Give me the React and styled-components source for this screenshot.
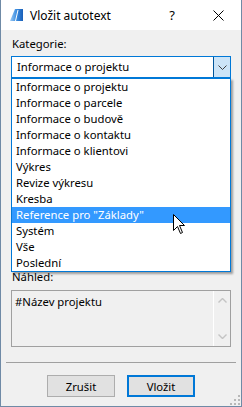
import React from "react";
import styled, { createGlobalStyle } from "styled-components";

const GlobalStyle = createGlobalStyle`
  html, body {
    margin: 0;
    padding: 0;
    background: #ffffff;
  }
  body {
    font-family: "Noto Sans", "Open Sans", sans-serif;
    font-size: 11.3px;
    color: #000000;
  }
`;

const items = [
  "Informace o projektu",
  "Informace o parcele",
  "Informace o budově",
  "Informace o kontaktu",
  "Informace o klientovi",
  "Výkres",
  "Revize výkresu",
  "Kresba",
  'Reference pro "Základy"',
  "Systém",
  "Vše",
  "Poslední",
];

export default function App() {
  return (
    <>
      <GlobalStyle />
      <Window>
        <TitleBar>
          <AppIcon />
          <Title>Vložit autotext</Title>
          <CaptionButton>?</CaptionButton>
          <CaptionButton>
            <svg width="11" height="11" viewBox="0 0 11 11">
              <path d="M0.5 0.5 L10.5 10.5 M10.5 0.5 L0.5 10.5" stroke="#000" strokeWidth="1" />
            </svg>
          </CaptionButton>
        </TitleBar>
        <Body>
          <Label>Kategorie:</Label>
          <ComboWrap>
            <Combo>
              <ComboText>Informace o projektu</ComboText>
              <ComboButton>
                <svg width="9" height="5" viewBox="0 0 9 5">
                  <path d="M0.5 0.5 L4.5 4.5 L8.5 0.5" stroke="#404040" fill="none" strokeWidth="1" />
                </svg>
              </ComboButton>
            </Combo>
            <DropList>
              {items.map((text, i) => (
                <DropItem key={text} $active={i === 8}>
                  {text}
                </DropItem>
              ))}
            </DropList>
            <Cursor />
          </ComboWrap>
          <HiddenArea />
          <Label>Náhled:</Label>
          <Preview>
            <PreviewText>#Název projektu</PreviewText>
            <ScrollBar>
              <svg width="9" height="5" viewBox="0 0 9 5">
                <path d="M0.5 4.5 L4.5 0.5 L8.5 4.5" stroke="#c4c4c4" fill="none" strokeWidth="1.4" />
              </svg>
              <svg width="9" height="5" viewBox="0 0 9 5">
                <path d="M0.5 0.5 L4.5 4.5 L8.5 0.5" stroke="#c4c4c4" fill="none" strokeWidth="1.4" />
              </svg>
            </ScrollBar>
          </Preview>
          <Separator />
          <Buttons>
            <Button>Zrušit</Button>
            <Button $default>Vložit</Button>
          </Buttons>
          <Grip>
            <svg width="10" height="10" viewBox="0 0 10 10" fill="#b8b8b8">
              <rect x="8" y="0" width="2" height="2" />
              <rect x="4" y="4" width="2" height="2" />
              <rect x="8" y="4" width="2" height="2" />
              <rect x="0" y="8" width="2" height="2" />
              <rect x="4" y="8" width="2" height="2" />
              <rect x="8" y="8" width="2" height="2" />
            </svg>
          </Grip>
        </Body>
      </Window>
    </>
  );
}

function AppIcon() {
  return (
    <IconBox>
      <svg width="14" height="13" viewBox="0 0 14 13">
        <defs>
          <linearGradient id="ag" x1="0" y1="0" x2="1" y2="0">
            <stop offset="0" stopColor="#9ccaf4" />
            <stop offset="0.5" stopColor="#3b8de0" />
            <stop offset="1" stopColor="#1a5fb8" />
          </linearGradient>
        </defs>
        <polygon points="0,12 5,0 13,0 13,12" fill="url(#ag)" />
        <path d="M5.5 12 L8 1" stroke="#ffffff" strokeWidth="1" />
      </svg>
    </IconBox>
  );
}

function Cursor() {
  return (
    <CursorBox>
      <svg width="13" height="21" viewBox="0 0 13 21">
        <path
          d="M0.5 0.5 L0.5 16.5 L4.5 12.5 L7.5 19.5 L9.5 18.5 L6.5 11.5 L11.5 11.5 Z"
          fill="#ffffff"
          stroke="#000000"
          strokeWidth="1"
        />
      </svg>
    </CursorBox>
  );
}

const Window = styled.div`
  width: 242px;
  height: 407px;
  box-sizing: border-box;
  border: 1px solid #6f8aa6;
  border-top: none;
  background: #f0f0f0;
  display: flex;
  flex-direction: column;
`;

const TitleBar = styled.div`
  height: 30px;
  background: #ffffff;
  display: flex;
  align-items: center;
`;

const IconBox = styled.div`
  width: 14px;
  height: 13px;
  margin-left: 9px;
  display: flex;
`;

const Title = styled.div`
  flex: 1;
  margin-left: 6px;
  font-size: 12px;
`;

const CaptionButton = styled.div`
  width: 46px;
  height: 30px;
  display: flex;
  align-items: center;
  justify-content: center;
  font-size: 13px;
`;

const Body = styled.div`
  flex: 1;
  position: relative;
  padding: 0 10px;
  display: flex;
  flex-direction: column;
`;

const Label = styled.div`
  height: 16px;
  line-height: 16px;
  margin-top: 6px;
  padding-left: 1px;
`;

const ComboWrap = styled.div`
  position: relative;
  margin-top: 4px;
`;

const Combo = styled.div`
  height: 22px;
  box-sizing: border-box;
  border: 1px solid #0078d7;
  background: #ffffff;
  display: flex;
  align-items: stretch;
`;

const ComboText = styled.div`
  flex: 1;
  padding-left: 5px;
  line-height: 20px;
`;

const ComboButton = styled.div`
  width: 16px;
  background: #cce4f7;
  border-left: 1px solid #005499;
  display: flex;
  align-items: center;
  justify-content: center;
`;

const DropList = styled.div`
  position: absolute;
  left: 0;
  right: 0;
  top: 22px;
  border: 1px solid #0078d7;
  background: #ffffff;
  box-shadow: 2px 2px 2px rgba(0, 0, 0, 0.35);
  z-index: 2;
`;

const DropItem = styled.div`
  height: 16px;
  line-height: 16px;
  padding-left: 4px;
  background: ${(p) => (p.$active ? "#3399ff" : "transparent")};
  color: ${(p) => (p.$active ? "#ffffff" : "#000000")};
`;

const CursorBox = styled.div`
  position: absolute;
  left: 162px;
  top: 158px;
  z-index: 3;
  display: flex;
`;

const HiddenArea = styled.div`
  height: 185px;
`;

const Preview = styled.div`
  margin-top: 5px;
  height: 57px;
  box-sizing: border-box;
  border: 1px solid #a0a0a0;
  display: flex;
`;

const PreviewText = styled.div`
  flex: 1;
  padding: 3px 3px;
  line-height: 16px;
`;

const ScrollBar = styled.div`
  width: 16px;
  border-left: 1px solid #ffffff;
  display: flex;
  flex-direction: column;
  justify-content: space-between;
  align-items: center;
  padding: 7px 0;
`;

const Separator = styled.div`
  margin: 15px -5px 0;
  height: 1px;
  background: #a0a0a0;
`;

const Buttons = styled.div`
  margin-top: 12px;
  display: flex;
  justify-content: center;
  gap: 12px;
`;

const Button = styled.div`
  width: 68px;
  height: 22px;
  box-sizing: border-box;
  border: ${(p) => (p.$default ? "2px solid #0078d7" : "1px solid #adadad")};
  background: #e1e1e1;
  display: flex;
  align-items: center;
  justify-content: center;
`;

const Grip = styled.div`
  position: absolute;
  right: 1px;
  bottom: 1px;
  display: flex;
`;
